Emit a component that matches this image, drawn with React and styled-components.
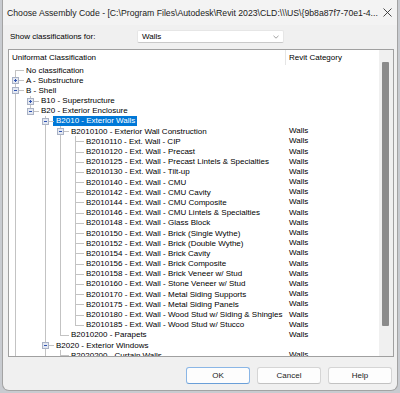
import React from "react";
import styled, { createGlobalStyle, css } from "styled-components";

const TITLE =
  "Choose Assembly Code - [C:\\Program Files\\Autodesk\\Revit 2023\\CLD:\\\\\\US\\{9b8a87f7-70e1-4...";

const wall = (code, name) => ({ level: 4, text: `${code} - Ext. Wall - ${name}`, cat: "Walls" });

const rows = [
  { level: 0, text: "No classification", conn: "top" },
  { level: 0, text: "A - Substructure", exp: "plus" },
  { level: 0, text: "B - Shell", exp: "minus" },
  { level: 1, text: "B10 - Superstructure", exp: "plus" },
  { level: 1, text: "B20 - Exterior Enclosure", exp: "minus", conn: "end" },
  { level: 2, text: "B2010 - Exterior Walls", exp: "minus", selected: true },
  { level: 3, text: "B2010100 - Exterior Wall Construction", exp: "minus", cat: "Walls" },
  wall("B2010110", "CIP"),
  wall("B2010120", "Precast"),
  wall("B2010125", "Precast Lintels & Specialties"),
  wall("B2010130", "Tilt-up"),
  wall("B2010140", "CMU"),
  wall("B2010142", "CMU Cavity"),
  wall("B2010144", "CMU Composite"),
  wall("B2010146", "CMU Lintels & Specialties"),
  wall("B2010148", "Glass Block"),
  wall("B2010150", "Brick (Single Wythe)"),
  wall("B2010152", "Brick (Double Wythe)"),
  wall("B2010154", "Brick Cavity"),
  wall("B2010156", "Brick Composite"),
  wall("B2010158", "Brick Veneer w/ Stud"),
  wall("B2010160", "Stone Veneer w/ Stud"),
  wall("B2010170", "Metal Siding Supports"),
  wall("B2010175", "Metal Siding Panels"),
  wall("B2010180", "Wood Stud w/ Siding & Shingles"),
  { ...wall("B2010185", "Wood Stud w/ Stucco"), conn: "end" },
  { level: 3, text: "B2010200 - Parapets", conn: "end", cat: "Walls" },
  { level: 2, text: "B2020 - Exterior Windows", exp: "minus" },
  { level: 3, text: "B2020200 - Curtain Walls", cat: "Walls" },
];

// levels whose siblings carry on below the visible part of the list
const CONTINUES = [0, 2, 3];

// a guide in column l runs through row i while a later sibling at level l is still to come
function guidesFor(index) {
  const row = rows[index];
  const out = [];
  for (let l = 0; l < row.level; l++) {
    let open = CONTINUES.includes(l);
    for (let j = index + 1; j < rows.length; j++) {
      if (rows[j].level === l) {
        open = true;
        break;
      }
      if (rows[j].level < l) {
        open = false;
        break;
      }
    }
    out.push(open);
  }
  return out;
}

const GlobalStyle = createGlobalStyle`
  html, body { margin: 0; padding: 0; }
  body { font-family: "Liberation Sans", Arial, sans-serif; }
`;

const Desktop = styled.div`
  width: 400px;
  height: 393px;
  box-sizing: border-box;
  padding: 0 2px 2px;
  background: #c8cbd0;
  display: flex;
`;

const Dialog = styled.div`
  flex: 1;
  display: flex;
  flex-direction: column;
  background: #f0f0f0;
  border: 1px solid #a3a3a3;
  border-top: none;
  border-radius: 0 0 7px 7px;
  overflow: hidden;
`;

const TitleBar = styled.div`
  height: 25px;
  flex: none;
  display: flex;
  align-items: center;
  padding: 0 4px 0 4px;
  background: #f3f3f3;
  color: #1b1b1b;
  font-size: 8.7px;
  white-space: nowrap;
`;

const Close = styled.svg`
  margin-left: auto;
  margin-right: 1px;
  flex: none;
`;

const Toolbar = styled.div`
  display: flex;
  align-items: center;
  padding: 5px 0 0 7px;
  height: 13px;
  font-size: 8px;
  color: #000;
`;

const FieldLabel = styled.span`
  width: 127px;
  flex: none;
`;

const Select = styled.div`
  width: 147px;
  height: 13px;
  box-sizing: border-box;
  display: flex;
  align-items: center;
  padding: 0 4px;
  background: #fff;
  border: 1px solid #e6e6e6;
  border-bottom-color: #c9c9c9;
  border-radius: 2px;
  font-size: 8px;
  svg {
    margin-left: auto;
  }
`;

const Panel = styled.div`
  margin: 6px 3px 0 5px;
  height: 308px;
  box-sizing: border-box;
  border: 1px solid #a0a0a0;
  background: #fff;
  display: grid;
  grid-template-columns: 1fr 14px;
  overflow: hidden;
`;

const List = styled.div`
  overflow: hidden;
  font-size: 8px;
  color: #000;
`;

const Cols = css`
  display: grid;
  grid-template-columns: 277px 1fr;
`;

const Header = styled.div`
  ${Cols};
  height: 15px;
  line-height: 15px;
  span {
    padding-left: 3px;
  }
  span:first-child {
    border-right: 1px solid #e5e5e5;
  }
`;

const Row = styled.div`
  ${Cols};
  height: 10.2px;
  line-height: 10px;
`;

const TreeCell = styled.div`
  display: flex;
  align-items: stretch;
  white-space: nowrap;
`;

const LINE = "#c3c3c3";

const Guide = styled.span`
  width: 15px;
  flex: none;
  position: relative;
  ${(p) =>
    p.$open &&
    css`
      &::before {
        content: "";
        position: absolute;
        left: 6px;
        top: 0;
        bottom: 0;
        width: 1px;
        background: ${LINE};
      }
    `}
`;

const Connector = styled.span`
  width: 15px;
  flex: none;
  position: relative;
  &::before {
    content: "";
    position: absolute;
    left: 6px;
    width: 1px;
    top: ${(p) => (p.$type === "top" ? "5px" : "0")};
    bottom: ${(p) => (p.$type === "end" ? "5px" : "0")};
    background: ${LINE};
  }
  &::after {
    content: "";
    position: absolute;
    left: 6px;
    top: 5px;
    width: 9px;
    height: 1px;
    background: ${LINE};
  }
`;

const Expander = styled.span`
  position: absolute;
  z-index: 1;
  left: 3px;
  top: 2px;
  width: 7px;
  height: 7px;
  box-sizing: border-box;
  border: 1px solid #aab2c4;
  background: #e3e8f2;
  &::before,
  &::after {
    content: "";
    position: absolute;
    background: #2f52b0;
  }
  &::before {
    left: 1px;
    right: 1px;
    top: 2px;
    height: 1px;
  }
  ${(p) =>
    p.$plus &&
    css`
      &::after {
        top: 1px;
        bottom: 1px;
        left: 2px;
        width: 1px;
      }
    `}
`;

const Label = styled.span`
  padding: 0 2px;
  margin-top: 0.5px;
  height: 9.5px;
  line-height: 9.5px;
  ${(p) =>
    p.$selected &&
    css`
      background: #0078d7;
      color: #fff;
      padding: 0 2px 0 3px;
      margin-left: -1px;
    `}
`;

const Category = styled.span`
  padding-left: 3px;
`;

const Scrollbar = styled.div`
  background: #f0f0f0;
  padding: 12px 0 0 3px;
`;

const Thumb = styled.div`
  width: 7px;
  height: 264px;
  background: #8b8b8b;
  border-radius: 1px;
`;

const Footer = styled.div`
  display: flex;
  justify-content: flex-end;
  gap: 7px;
  padding: 10px 5px 0 0;
`;

const Button = styled.button`
  width: 64px;
  height: 17px;
  padding: 0;
  box-sizing: border-box;
  font-family: inherit;
  font-size: 8px;
  color: #1b1b1b;
  background: #fdfdfd;
  border: 1px solid ${(p) => (p.$primary ? "#8ab6e6" : "#d5d5d5")};
  border-bottom-color: ${(p) => (p.$primary ? "#6a9fd8" : "#c2c2c2")};
  border-radius: 3px;
`;

function TreeRow({ row, index }) {
  const guides = guidesFor(index);
  return (
    <Row>
      <TreeCell>
        {guides.map((open, l) => (
          <Guide key={l} $open={open} />
        ))}
        <Connector $type={row.conn || "tee"}>
          {row.exp && <Expander $plus={row.exp === "plus"} />}
        </Connector>
        <Label $selected={row.selected}>{row.text}</Label>
      </TreeCell>
      <Category>{row.cat || ""}</Category>
    </Row>
  );
}

export default function App() {
  return (
    <>
      <GlobalStyle />
      <Desktop>
        <Dialog>
          <TitleBar>
            <span>{TITLE}</span>
            <Close width="9" height="9" viewBox="0 0 9 9">
              <path d="M0.5 0.5L8.5 8.5M8.5 0.5L0.5 8.5" stroke="#333" strokeWidth="0.9" />
            </Close>
          </TitleBar>
          <Toolbar>
            <FieldLabel>Show classifications for:</FieldLabel>
            <Select>
              <span>Walls</span>
              <svg width="6" height="4" viewBox="0 0 6 4">
                <path d="M0.5 0.8L3 3.2L5.5 0.8" fill="none" stroke="#8a8a8a" strokeWidth="0.8" />
              </svg>
            </Select>
          </Toolbar>
          <Panel>
            <List>
              <Header>
                <span>Uniformat Classification</span>
                <span>Revit Category</span>
              </Header>
              {rows.map((row, i) => (
                <TreeRow key={i} row={row} index={i} />
              ))}
            </List>
            <Scrollbar>
              <Thumb />
            </Scrollbar>
          </Panel>
          <Footer>
            <Button $primary>OK</Button>
            <Button>Cancel</Button>
            <Button>Help</Button>
          </Footer>
        </Dialog>
      </Desktop>
    </>
  );
}
